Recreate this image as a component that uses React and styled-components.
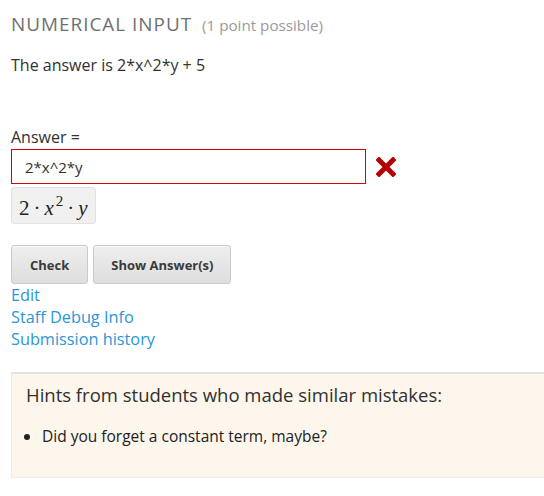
import React from "react";
import styled, { createGlobalStyle } from "styled-components";

const Global = createGlobalStyle`
  html, body { margin: 0; padding: 0; background: #fff; }
  body { font-family: "Open Sans", "Liberation Sans", sans-serif; color: #313131; }
`;

const Page = styled.div`
  padding: 11px 0 0 11px;
  width: 533px;
  overflow: hidden;
`;

const Title = styled.h2`
  margin: 0;
  font-size: 18.9px;
  font-weight: 400;
  letter-spacing: 1px;
  color: #707070;
  line-height: 26px;
  display: flex;
  align-items: baseline;
  gap: 10px;
`;

const Points = styled.span`
  font-size: 15.2px;
  letter-spacing: 0;
  color: #9a9a9a;
`;

const Text = styled.p`
  margin: ${(p) => p.$m || "0"};
  font-size: 16px;
  line-height: 22px;
  color: #313131;
`;

const InputRow = styled.div`
  display: flex;
  align-items: center;
  gap: 10px;
  margin-top: 1px;
`;

const Field = styled.div`
  box-sizing: border-box;
  width: 355px;
  height: 35px;
  border: 1px solid #dd0000;
  padding: 0 13px;
  display: flex;
  align-items: center;
  font-size: 15px;
  color: #313131;
`;

const MathBox = styled.div`
  box-sizing: border-box;
  display: inline-flex;
  align-items: baseline;
  height: 37px;
  padding: 8px 7px 0 7px;
  margin-top: 3px;
  background: #f0f0f0;
  border: 1px solid #e2e2e2;
  border-radius: 3px;
  font-family: "Liberation Serif", "DejaVu Serif", serif;
  font-size: 21px;
  line-height: 24px;
  color: #222;
`;

const Var = styled.i`
  font-style: italic;
`;

const Sup = styled.span`
  font-size: 15px;
  position: relative;
  top: -9px;
  margin-left: 2px;
`;

const Dot = styled.span`
  margin: 0 ${(p) => p.$m || 4}px;
`;

const Buttons = styled.div`
  display: flex;
  gap: 5px;
  margin-top: 21px;
`;

const Button = styled.button`
  box-sizing: border-box;
  height: 39px;
  padding: 0 ${(p) => p.$px || 18}px;
  border: 1px solid #cacaca;
  border-radius: 3px;
  background: linear-gradient(#eeeeee, #dedede);
  box-shadow: inset 0 1px 0 #f8f8f8;
  font-family: "Open Sans", "Liberation Sans", sans-serif;
  font-weight: 700;
  font-size: 13px;
  color: #3a3a3a;
`;

const Links = styled.div`
  display: flex;
  flex-direction: column;
  align-items: flex-start;
`;

const Link = styled.a`
  font-size: 16.3px;
  line-height: 22px;
  color: #2b96d6;
  text-decoration: none;
`;

const Hints = styled.section`
  margin-top: 22px;
  box-sizing: border-box;
  width: 560px;
  height: 106px;
  background: #fdf6ec;
  border-top: 2px solid #e6e3de;
  border-left: 1px solid #efebe4;
  border-bottom: 1px solid #efebe4;
  padding: 7px 14px;
`;

const HintsTitle = styled.h3`
  margin: 0;
  font-size: 18.5px;
  font-weight: 400;
  line-height: 28px;
  color: #313131;
`;

const HintList = styled.ul`
  margin: 16px 0 0 0;
  padding-left: 16px;
  font-size: 15.5px;
  line-height: 22px;
  color: #222;
`;

const Cross = () => (
  <svg width="20" height="20" viewBox="0 0 20 20" aria-hidden="true">
    <path d="M3 3 L17 17 M17 3 L3 17" stroke="#b40000" strokeWidth="5" strokeLinecap="square" />
  </svg>
);

export default function App() {
  return (
    <>
      <Global />
      <Page>
        <Title>
          NUMERICAL INPUT <Points>(1 point possible)</Points>
        </Title>
        <Text $m="16px 0 0 0">The answer is 2*x^2*y + 5</Text>
        <Text $m="50px 0 0 0">Answer =</Text>
        <InputRow>
          <Field>2*x^2*y</Field>
          <Cross />
        </InputRow>
        <MathBox>
          2<Dot $m={4}>·</Dot>
          <Var>x</Var>
          <Sup>2</Sup>
          <Dot $m={4}>·</Dot>
          <Var>y</Var>
        </MathBox>
        <Buttons>
          <Button $px={18}>Check</Button>
          <Button $px={17}>Show Answer(s)</Button>
        </Buttons>
        <Links>
          <Link href="#">Edit</Link>
          <Link href="#">Staff Debug Info</Link>
          <Link href="#">Submission history</Link>
        </Links>
        <Hints>
          <HintsTitle>Hints from students who made similar mistakes:</HintsTitle>
          <HintList>
            <li>Did you forget a constant term, maybe?</li>
          </HintList>
        </Hints>
      </Page>
    </>
  );
}
